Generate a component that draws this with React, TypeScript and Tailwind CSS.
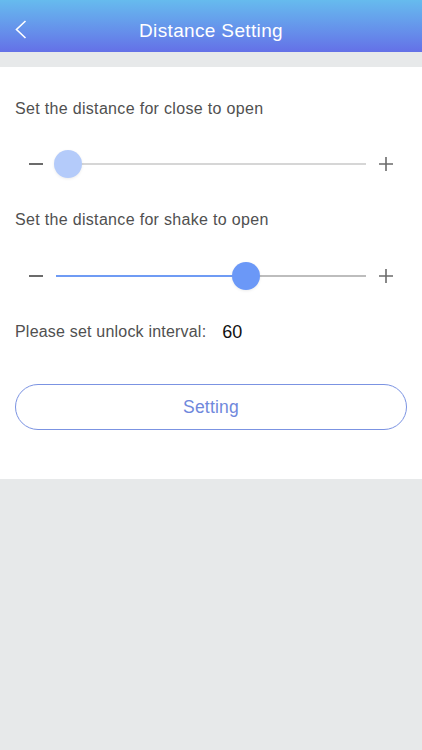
import { useState } from 'react'

function Slider({ value, light }: { value: number; light?: boolean }) {
  // track spans 56..366, thumb center at value fraction
  const pct = value * 100
  return (
    <div className="flex items-center h-[28px]">
      <div className="w-[56px] flex justify-end pr-[13px]">
        <div className="w-[14px] h-[2px] bg-[#6b6b6b]" />
      </div>
      <div className="relative flex-1 h-[28px]">
        <div className={`absolute left-0 right-0 top-[13px] h-[2px] ${light ? 'bg-[#d6d6d6]' : 'bg-[#bdbdbd]'}`} />
        <div className="absolute left-0 top-[13px] h-[2px] bg-[#6f9bf4]" style={{ width: `${pct}%` }} />
        <div
          className="absolute top-0 w-[28px] h-[28px] -ml-[14px] rounded-full shadow-[0_1px_3px_rgba(0,0,0,0.08)]"
          style={{ left: `${pct}%`, background: light ? '#b4cbfa' : '#6b98f7' }}
        />
      </div>
      <div className="w-[56px] flex justify-start pl-[13px]">
        <svg width="14" height="14" viewBox="0 0 14 14">
          <path d="M7 0V14M0 7H14" stroke="#6b6b6b" strokeWidth="1.6" />
        </svg>
      </div>
    </div>
  )
}

function App() {
  const [interval] = useState<number>(60)

  return (
    <div className="min-h-[750px] bg-[#e7e9ea]" style={{ fontFamily: '"Liberation Sans", Arial, sans-serif' }}>
      <header className="h-[52px] relative flex items-center justify-center bg-gradient-to-b from-[#66bbee] to-[#6470e7]">
        <svg className="absolute left-[15px] top-[20px]" width="12" height="19" viewBox="0 0 12 19">
          <path d="M10.5 1L1.5 9.5L10.5 18" stroke="white" strokeWidth="1.6" fill="none" />
        </svg>
        <h1 className="text-white text-[19px] tracking-[0.35px] pt-[10px]">Distance Setting</h1>
      </header>

      <div className="mt-[15px] bg-white h-[412px] px-[15px]">
        <p className="pt-[31px] text-[16px] tracking-[0.32px] leading-[22px] text-[#505050]">Set the distance for close to open</p>
        <div className="-mx-[15px] mt-[30px]">
          <Slider value={0.04} light />
        </div>
        <p className="mt-[31px] text-[16px] tracking-[0.32px] leading-[22px] text-[#505050]">Set the distance for shake to open</p>
        <div className="-mx-[15px] mt-[31px]">
          <Slider value={0.613} />
        </div>
        <div className="mt-[31px] flex items-center h-[22px]">
          <span className="text-[16px] tracking-[0.2px] text-[#505050]">Please set unlock interval:</span>
          <span className="ml-[16px] text-[18px] text-[#111]">{interval}</span>
        </div>
        <button className="mt-[41px] w-full h-[46px] rounded-full border border-[#7b93e2] text-[#6f88dc] text-[17.5px] tracking-[0.2px]">
          Setting
        </button>
      </div>
    </div>
  )
}

export default App
